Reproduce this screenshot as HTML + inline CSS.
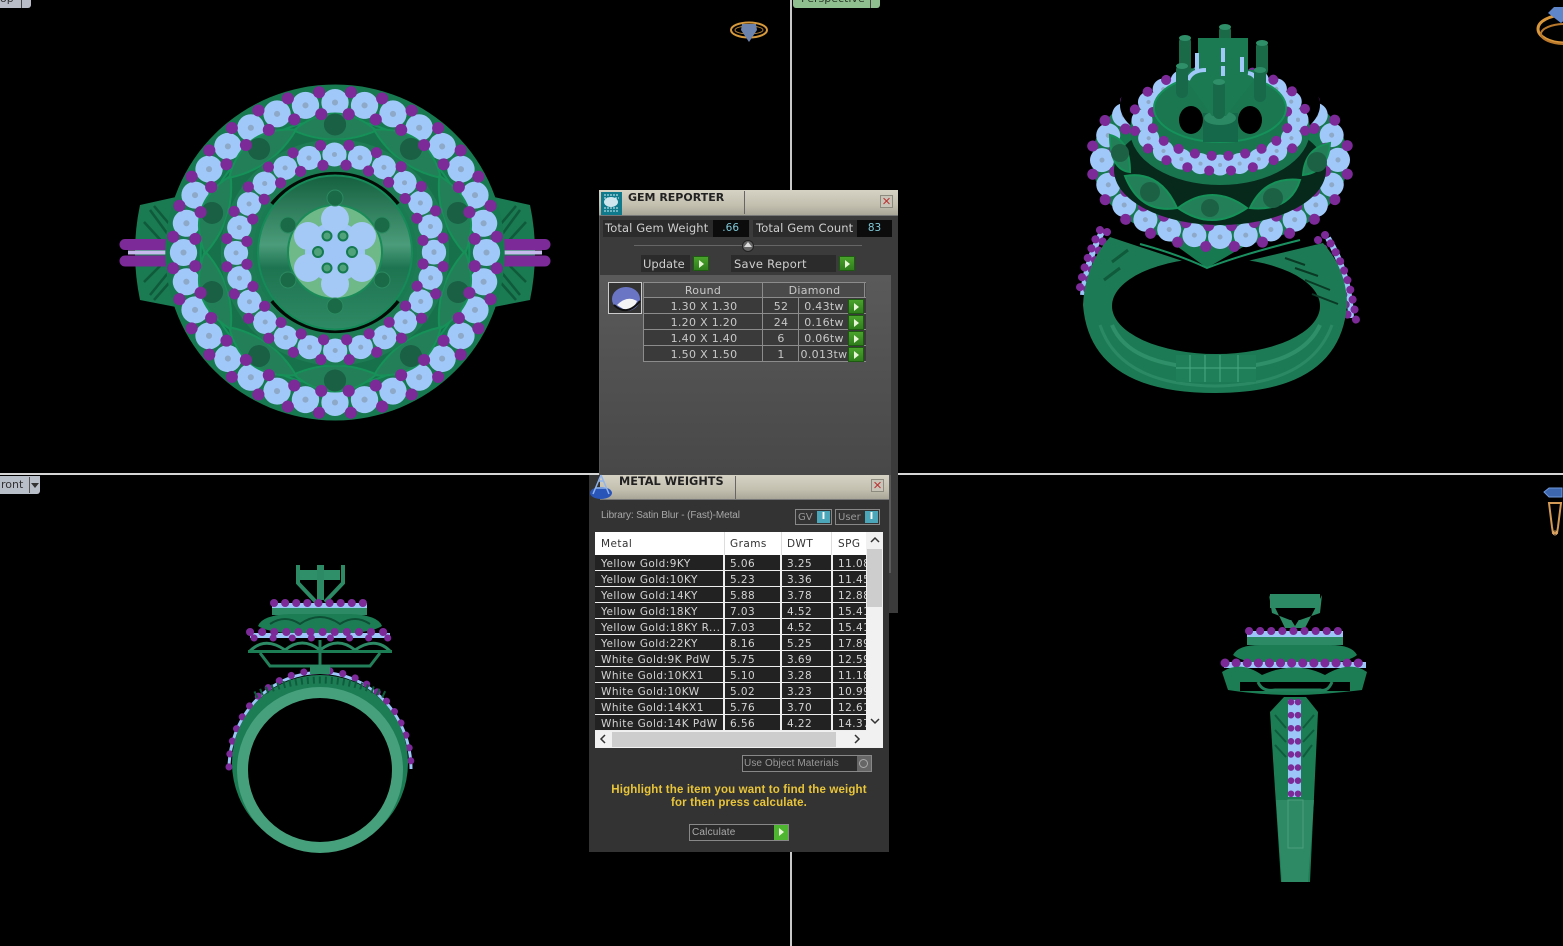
<!DOCTYPE html>
<html><head><meta charset="utf-8"><title>Gem Reporter</title>
<style>
html,body{margin:0;padding:0;background:#000;width:1563px;height:946px;overflow:hidden}
body{position:relative;font-family:"DejaVu Sans","Liberation Sans",sans-serif;font-size:11px;color:#cfcfcf}
svg.bg{position:absolute;left:0;top:0}
.a{position:absolute;white-space:nowrap;box-sizing:border-box}
.gem{fill:none;stroke:#a0c8f8;stroke-linecap:round;stroke-dasharray:.001 .999}
.core{fill:none;stroke:#8ea8c8;stroke-linecap:round;stroke-dasharray:.001 .999}
.pur{fill:none;stroke:#7b2a97;stroke-linecap:round;stroke-dasharray:.001 .999;stroke-dashoffset:.5}
.btn{position:absolute;background:linear-gradient(#4aa32c,#2f7d1c);box-sizing:border-box;border:1px solid #1f5a12}
.btn:after{content:"";position:absolute;left:5px;top:3px;border-left:5px solid #e8f6d8;border-top:4px solid transparent;border-bottom:4px solid transparent}
.title{background:linear-gradient(#d6d2c4,#c4c0b0 60%,#a9a698);border-bottom:1px solid #777}
.x{position:absolute;width:13px;height:13px;background:#c8c4b8;border:1px solid #8d8a80;box-sizing:border-box;color:#b33;font:15px/11px "Liberation Sans",sans-serif;text-align:center}
.r{position:absolute;left:644px;width:222px;height:16px;border-bottom:1px solid #8c8c8c;background:#3a3a3a;color:#c8c8c8;box-sizing:border-box;line-height:15px;letter-spacing:.3px}
.r span{position:absolute;top:1px;text-align:center}
.r.h span{top:0}
.m{position:absolute;left:0;width:271px;height:16px;background:#222;color:#d4d4d4;border-bottom:1px solid #eee;box-sizing:border-box;line-height:15px;font-size:10.5px;letter-spacing:.45px}
.m span{position:absolute;top:2px;white-space:nowrap}
.m i{position:absolute;top:0;width:2px;height:16px;background:#eee}
</style></head>
<body>
<svg class="bg" width="1563" height="946" viewBox="0 0 1563 946" xmlns="http://www.w3.org/2000/svg">
<defs>
<linearGradient id="disk" x1="0" y1="0" x2="0" y2="1"><stop offset="0" stop-color="#14603f"/><stop offset=".45" stop-color="#4b9c7a"/><stop offset=".6" stop-color="#1d7450"/><stop offset="1" stop-color="#2e8a64"/></linearGradient>
<g id="eye"><path d="M-41 -122Q0 -156 41 -122Q0 -104 -41 -122Z" fill="#237f58" stroke="#169158" stroke-width="2"/><circle cy="-128" r="11" fill="#1a6045"/></g>
</defs>
<rect width="1563" height="946" fill="#000"/>

<!-- TOP VIEW -->
<g>
<path d="M140 205L176 197V307L140 300Q130 252 140 205Z" fill="#1a7a52"/>
<path d="M530 205L494 197V307L530 300Q540 252 530 205Z" fill="#1a7a52"/>
<path d="M150 210L172 240M144 222L166 246M154 206L176 232M150 295L172 268M144 282L166 260M154 300L176 275M520 210L498 240M526 222L504 246M516 206L494 232M520 295L498 268M526 282L504 260M516 300L494 275" stroke="#0f5a3a" stroke-width="2.500"/>
<g stroke="#7b2a97" stroke-width="11" stroke-linecap="round"><path d="M125 244.500H170M125 261H170M500 244.500H545M500 261H545"/></g>
<path d="M128 252.500H175M495 252.500H542" stroke="#c7b8ee" stroke-width="4"/>
<g transform="translate(335 252.500) scale(1.01 1)">
<circle r="168" fill="#17794f"/>
<circle r="150" pathLength="32" class="gem" stroke-width="27"/>
<circle r="150" pathLength="32" class="core" stroke-width="6"/>
<circle r="161" pathLength="32" class="pur" stroke-width="12"/>
<circle r="133" fill="#17724b"/>
<circle r="133" fill="none" stroke="#15925c" stroke-width="2"/>
<use href="#eye"/>
<use href="#eye" transform="rotate(36)"/>
<use href="#eye" transform="rotate(72)"/>
<use href="#eye" transform="rotate(108)"/>
<use href="#eye" transform="rotate(144)"/>
<use href="#eye" transform="rotate(180)"/>
<use href="#eye" transform="rotate(216)"/>
<use href="#eye" transform="rotate(252)"/>
<use href="#eye" transform="rotate(288)"/>
<use href="#eye" transform="rotate(324)"/>
<circle r="139" pathLength="32" class="pur" stroke-width="12"/>
<circle r="113" fill="#1d7c54"/>
<circle r="98" pathLength="24" class="gem" stroke-width="24"/>
<circle r="98" pathLength="24" class="core" stroke-width="5"/>
<circle r="108" pathLength="24" class="pur" stroke-width="11"/>
<circle r="88" pathLength="24" class="pur" stroke-width="11"/>
<circle r="81" fill="#1a7a52"/>
</g>
<path d="M272 204A81 81 0 0 1 398 204M272 301A81 81 0 0 0 398 301" fill="none" stroke="#020a06" stroke-width="4"/>
<circle cx="335" cy="252.500" r="77" fill="url(#disk)" stroke="#168a58" stroke-width="2"/>
<circle cx="335" cy="252" r="47" fill="#6fb888" stroke="#1a8a58" stroke-width="2"/>
<circle cx="335" cy="252" r="30" fill="#9fc6f6"/>
<g fill="#a4c9f6">
<circle cx="335" cy="219" r="14"/><circle cx="308" cy="236" r="14"/><circle cx="362" cy="236" r="14"/><circle cx="308" cy="268" r="14"/><circle cx="362" cy="268" r="14"/><circle cx="335" cy="284" r="14"/>
</g>
<g fill="#4fa27a" stroke="#157a50" stroke-width="2"><circle cx="318" cy="252" r="5"/><circle cx="352" cy="252" r="5"/><circle cx="327" cy="236" r="4.500"/><circle cx="343" cy="236" r="4.500"/><circle cx="327" cy="268" r="4.500"/><circle cx="343" cy="268" r="4.500"/></g>
<g fill="#1a6a48" stroke="#2b8a60"><circle cx="335" cy="198" r="8"/><circle cx="288" cy="225" r="8"/><circle cx="382" cy="225" r="8"/><circle cx="288" cy="280" r="8"/><circle cx="382" cy="280" r="8"/><circle cx="335" cy="306" r="8"/></g>
</g>

<!-- PERSPECTIVE VIEW -->
<g>
<path d="M1102 232Q1086 262 1083 295" stroke="#9cc5f8" stroke-width="6" fill="none"/>
<path d="M1328 238Q1350 275 1351 318" stroke="#9cc5f8" stroke-width="6" fill="none"/>
<g stroke-linecap="round" fill="none" stroke="#7b2a97" stroke-width="8" stroke-dasharray=".1 10">
<path d="M1100 230Q1082 265 1079 295"/><path d="M1107 232Q1090 268 1087 290"/>
<path d="M1325 235Q1350 270 1356 320"/><path d="M1318 240Q1342 275 1348 318"/>
</g>
<path d="M1083 305Q1085 265 1110 237L1210 270L1323 243Q1347 270 1347 305Q1340 393 1215 393Q1090 393 1083 305Z" fill="#1c7b54"/>
<path d="M1100 325Q1120 385 1215 386Q1310 385 1332 325" fill="none" stroke="#2b8a64" stroke-width="3"/>
<ellipse cx="1216" cy="306" rx="104" ry="48" fill="#000"/>
<path d="M1112 325Q1130 368 1216 368Q1300 368 1320 325" fill="none" stroke="#2f8f68" stroke-width="4"/>
<path d="M1176 355H1256V382H1176Z" fill="#1e7f58"/>
<path d="M1176 368H1256M1190 355V382M1205 355V382M1220 355V382M1238 355V382" stroke="#4aa884" stroke-width="1"/>
<path d="M1285 258L1305 265M1295 268L1318 276M1305 280L1330 290M1312 294L1338 304" stroke="#0a3a26" stroke-width="2"/>
<path d="M1112 262L1128 250M1104 280L1120 268" stroke="#0f5a3a" stroke-width="3"/>
<path d="M1120 205L1207 268L1315 205Z" fill="#17794f"/>
<path d="M1140 244Q1180 255 1207 268Q1240 255 1300 240" fill="none" stroke="#1a9060" stroke-width="2"/>
<ellipse cx="1220" cy="160" rx="128" ry="86" fill="#17794f"/>
<ellipse cx="1220" cy="160" rx="118" ry="77" pathLength="24" class="gem" stroke-width="24"/>
<ellipse cx="1220" cy="160" rx="118" ry="77" pathLength="24" class="core" stroke-width="5"/>
<ellipse cx="1220" cy="160" rx="129" ry="87" pathLength="24" class="pur" stroke-width="11"/>
<ellipse cx="1220" cy="160" rx="107" ry="66" pathLength="24" class="pur" stroke-width="11"/>
<ellipse cx="1220" cy="105" rx="100" ry="46" fill="#000"/>
<ellipse cx="1220" cy="170" rx="106" ry="55" fill="#07291c"/>
<g fill="#237f58" stroke="#169158" stroke-width="2">
<path d="M1178 208Q1212 182 1247 208Q1212 232 1178 208Z"/>
<path d="M1125 176Q1160 170 1177 208Q1140 214 1125 176Z"/>
<path d="M1250 208Q1265 176 1300 180Q1290 212 1250 208Z"/>
<path d="M1110 135Q1130 140 1130 172Q1110 170 1110 135Z"/>
<path d="M1330 143Q1305 148 1303 175Q1328 172 1330 143Z"/>
</g>
<g fill="#1d6145"><circle cx="1210" cy="208" r="9"/><circle cx="1150" cy="192" r="10"/><circle cx="1273" cy="198" r="10"/><circle cx="1120" cy="153" r="9"/><circle cx="1317" cy="162" r="10"/></g>
<ellipse cx="1220" cy="130" rx="90" ry="55" fill="#18754e"/>
<ellipse cx="1220" cy="120" rx="78" ry="45" pathLength="20" class="gem" stroke-width="21"/>
<ellipse cx="1220" cy="120" rx="78" ry="45" pathLength="20" class="core" stroke-width="4"/>
<ellipse cx="1220" cy="120" rx="87" ry="51" pathLength="20" class="pur" stroke-width="10"/>
<ellipse cx="1220" cy="120" rx="69" ry="36" pathLength="20" class="pur" stroke-width="10"/>
<ellipse cx="1220" cy="108" rx="66" ry="34" fill="#1a7750" stroke="#15915a" stroke-width="2"/>
<ellipse cx="1191" cy="120" rx="12" ry="14" fill="#000"/><ellipse cx="1250" cy="120" rx="12" ry="14" fill="#000"/>
<rect x="1203" y="113" width="35" height="29" fill="#15684a"/>
<ellipse cx="1220" cy="118" rx="16" ry="7" fill="#2b8a63"/>
<path d="M1178 68L1262 70L1226 116H1212Z" fill="#1b7a52"/>
<g fill="none" stroke-linecap="round" stroke="#1a6a48" stroke-width="12"><path d="M1185 42V68M1225 31V58M1262 47V70"/></g>
<rect x="1198" y="38" width="50" height="35" fill="#1b7a52"/>
<g fill="none" stroke="#a0c8f8" stroke-width="4"><path d="M1197 53V70M1242 57V72M1223 48V62M1223 66V76"/><path d="M1188 80Q1192 70 1206 70M1248 73Q1256 74 1258 84"/></g>
<g fill="none" stroke-linecap="round" stroke="#18684a" stroke-width="12"><path d="M1182 70V92M1260 74V96M1219 86V113"/></g>
<g fill="#2f8f68"><ellipse cx="1185" cy="38" rx="6" ry="3"/><ellipse cx="1225" cy="27" rx="6" ry="3"/><ellipse cx="1262" cy="43" rx="6" ry="3"/><ellipse cx="1182" cy="66" rx="6" ry="3"/><ellipse cx="1260" cy="70" rx="6" ry="3"/><ellipse cx="1219" cy="82" rx="6" ry="3"/></g>
</g>

<!-- FRONT VIEW -->
<g>
<path d="M229 767A90.500 96 0 0 1 411 767" fill="none" stroke="#9cc5f8" stroke-width="3" transform="translate(0 2)"/>
<path d="M229 767A90.500 96 0 0 1 411 767" fill="none" stroke="#7b2a97" stroke-width="7" stroke-linecap="round" stroke-dasharray=".1 13"/>
<circle cx="320" cy="763" r="88" fill="#1c7d55"/>
<path d="M255 695Q320 665 385 695" fill="none" stroke="#0e5c3b" stroke-width="7" stroke-dasharray="2 4"/>
<circle cx="320" cy="770" r="83" fill="#46a07c"/>
<circle cx="320" cy="770" r="72" fill="#000"/>
<path d="M298 565V583L316 602M343 565V583L325 602" stroke="#2c8a64" stroke-width="4" fill="none"/>
<rect x="300" y="570" width="40" height="10" fill="#2f8f68"/>
<rect x="317" y="565" width="7" height="35" fill="#2c8a64"/>
<rect x="272" y="603" width="95" height="5" fill="#9cc5f8"/>
<path d="M274 603H367" stroke="#7b2a97" stroke-width="8" stroke-linecap="round" stroke-dasharray=".1 11"/>
<rect x="272" y="608" width="95" height="7" fill="#2c8a64"/>
<path d="M258 626Q262 615 290 614H350Q378 615 382 626Q370 634 320 635Q270 634 258 626Z" fill="#1c7d55"/>
<path d="M270 624Q285 614 300 624Q320 610 340 624Q355 614 370 624" stroke="#0d4f35" stroke-width="2" fill="none"/>
<rect x="250" y="633" width="140" height="5" fill="#9cc5f8"/>
<path d="M250 632H392" stroke="#7b2a97" stroke-width="8" stroke-linecap="round" stroke-dasharray=".1 12"/>
<path d="M254 638H388" stroke="#7b2a97" stroke-width="7" stroke-linecap="round" stroke-dasharray=".1 19"/>
<path d="M250 651Q265 636 285 650Q302 636 320 650Q338 636 355 650Q375 636 390 651" fill="none" stroke="#2c8a64" stroke-width="3"/>
<rect x="248" y="650" width="144" height="3" fill="#1c7d55"/>
<path d="M260 653L270 666H370L380 653M320 640V666" fill="none" stroke="#22805a" stroke-width="3"/>
<rect x="310" y="665" width="20" height="9" fill="#2c8a64"/>
</g>

<!-- RIGHT VIEW -->
<g>
<path d="M1269 595L1285 628H1305L1322 595L1320 613L1300 620H1290L1272 613Z" fill="#2c8a64"/>
<rect x="1270" y="594" width="50" height="14" fill="#2c8a64"/>
<path d="M1285 610H1305L1295 626Z" fill="#000"/>
<rect x="1247" y="631" width="96" height="6" fill="#9cc5f8"/>
<path d="M1249 631H1342" stroke="#7b2a97" stroke-width="8" stroke-linecap="round" stroke-dasharray=".1 11"/>
<rect x="1247" y="637" width="96" height="8" fill="#2c8a64"/>
<path d="M1233 655Q1238 645 1260 645H1330Q1352 645 1357 655Q1345 665 1295 665Q1245 665 1233 655Z" fill="#1c7d55"/>
<rect x="1224" y="662" width="142" height="6" fill="#9cc5f8"/>
<path d="M1225 663H1365" stroke="#7b2a97" stroke-width="9" stroke-linecap="round" stroke-dasharray=".1 11"/>
<path d="M1222 672Q1240 660 1262 675Q1295 660 1325 675Q1350 660 1367 672L1362 690Q1320 695 1295 695Q1260 695 1228 690Z" fill="#1c7d55"/>
<path d="M1240 682H1350V691H1240Z" fill="#000"/>
<path d="M1258 682Q1262 692 1275 690H1320Q1328 692 1332 682" stroke="#22805a" stroke-width="3" fill="none"/>
<path d="M1284 697H1306L1318 712L1310 882H1281L1270 712Z" fill="#1c7d55"/>
<path d="M1276 800H1314L1308 882H1282Z" fill="#2d8a65"/>
<path d="M1288 800H1303V848H1288Z" fill="none" stroke="#4aa07c"/>
<rect x="1288" y="700" width="13" height="97" fill="#9cc5f8"/>
<path d="M1291 702V797M1298 702V797" stroke="#7b2a97" stroke-width="6.500" stroke-linecap="round" stroke-dasharray=".1 13"/>
<path d="M1275 715L1286 728M1275 730L1286 742M1275 745L1286 757M1314 715L1303 728M1314 730L1303 742M1312 745L1303 757" stroke="#0e5c3b" stroke-width="2"/>
</g>

<!-- GUMBALLS -->
<g fill="none">
<ellipse cx="749" cy="30" rx="18" ry="7.500" stroke="#d79a3c" stroke-width="2"/>
<ellipse cx="749" cy="30" rx="14" ry="4" stroke="#b47f30"/>
<path d="M742 24h14l1 6l-8 12l-8 -12z" fill="#6c83ad"/>
<ellipse cx="1565" cy="29" rx="27" ry="14" stroke="#d9973c" stroke-width="3"/>
<ellipse cx="1565" cy="34" rx="24" ry="10" stroke="#b8782c" stroke-width="2"/>
<path d="M1548 13l6 -6h13l6 6l-12 10z" fill="#5f86c8"/>
<path d="M1544 492l5 -4h13v9h-13z" fill="#3d68b0" stroke="#6f97dc"/>
<path d="M1549 503H1561L1558 527L1557 533H1553L1552 527Z" stroke="#d29a56" stroke-width="2"/>
<circle cx="1555" cy="533" r="2" stroke="#e0ac6c"/>
</g>

<!-- VIEWPORT DIVIDERS -->
<rect x="790" y="0" width="2" height="190" fill="#c9c9c9"/>
<rect x="790" y="852" width="2" height="94" fill="#c9c9c9"/>
<rect x="0" y="473" width="600" height="2" fill="#d6d6d6"/>
<rect x="898" y="473" width="665" height="2" fill="#d6d6d6"/>
</svg>

<!-- Tabs -->
<div class="a" style="left:0;top:0;width:31px;height:8px;background:#b9bdc8;border-radius:0 0 3px 0;overflow:hidden;color:#333;line-height:0;font-size:11px"><span style="position:absolute;left:0;top:-8px;line-height:13px">op</span><span style="position:absolute;left:21px;top:0;width:1px;height:8px;background:#444"></span></div>
<div class="a" style="left:793px;top:0;width:87px;height:8px;background:#8fbf8f;border-radius:0 0 3px 3px;overflow:hidden;color:#2a3a2a"><span style="position:absolute;left:8px;top:-8px;line-height:13px">Perspective</span><span style="position:absolute;left:77px;top:0;width:1px;height:8px;background:#444"></span></div>
<div class="a" style="left:0;top:476px;width:40px;height:18px;background:#b9bfc9;border-radius:0 0 3px 0;color:#333;line-height:18px"><span style="position:absolute;left:1px;top:0">ront</span><span style="position:absolute;left:29px;top:1px;width:1px;height:16px;background:#555"></span><span style="position:absolute;left:31px;top:7px;border-top:5px solid #333;border-left:4px solid transparent;border-right:4px solid transparent"></span></div>

<!-- GEM REPORTER -->
<div class="a" style="left:599px;top:190px;width:299px;height:423px;background:#3b3b3b;border-left:1px solid #555"></div>
<div class="a title" style="left:599px;top:190px;width:299px;height:26px"></div>
<div class="a" style="left:744px;top:191px;width:1px;height:23px;background:#666"></div>
<div class="a" style="left:601px;top:192px;width:21px;height:23px;background:#0e7a8c"><svg width="21" height="23"><ellipse cx="10" cy="10" rx="7" ry="5" fill="#cfe6ee"/><path d="M3 3h15M3 6h4M14 6h4M3 16h15M3 19h15" stroke="#d5f0f5" stroke-dasharray="2 1"/></svg></div>
<div class="a" style="left:628px;top:191px;font-weight:bold;font-size:11px;line-height:14px;color:#222">GEM REPORTER</div>
<div class="x" style="left:880px;top:195px">×</div>

<div class="a" style="left:603px;top:220px;width:110px;height:17px;background:#2b2b2b;line-height:16px;padding-left:2px;font-size:11.500px;letter-spacing:.12px">Total Gem Weight</div>
<div class="a" style="left:713px;top:220px;width:36px;height:17px;background:#0c0c0c;color:#7fc8d8;text-align:right;padding-right:10px;line-height:17px;font-size:10.500px">.66</div>
<div class="a" style="left:753px;top:220px;width:105px;height:17px;background:#2b2b2b;line-height:16px;padding-left:3px;font-size:11.500px;letter-spacing:.12px">Total Gem Count</div>
<div class="a" style="left:857px;top:220px;width:35px;height:17px;background:#0c0c0c;color:#7fc8d8;text-align:center;line-height:17px;font-size:10.500px">83</div>
<div class="a" style="left:634px;top:245px;width:228px;height:1px;background:#0c0c0c;border-bottom:1px solid #666"></div>
<div class="a" style="left:742px;top:240px;width:12px;height:12px;border-radius:50%;background:#666;border:1px solid #222"><span style="position:absolute;left:1px;top:1px;border-bottom:5px solid #ddd;border-left:4px solid transparent;border-right:4px solid transparent"></span></div>
<div class="a" style="left:641px;top:255px;width:49px;height:17px;background:#2b2b2b;line-height:19px;padding-left:2px;font-size:11.500px">Update</div>
<div class="btn" style="left:693px;top:256px;width:16px;height:15px"></div>
<div class="a" style="left:731px;top:255px;width:105px;height:17px;background:#2b2b2b;line-height:19px;padding-left:3px;font-size:11.500px;letter-spacing:.25px">Save Report</div>
<div class="btn" style="left:839px;top:256px;width:16px;height:15px"></div>

<div class="a" style="left:600px;top:275px;width:291px;height:200px;background:linear-gradient(#5a5a5a,#484848)"></div>
<div class="a" style="left:608px;top:282px;width:34px;height:32px;border:1px solid #ccc;background:#333"><svg width="32" height="30"><ellipse cx="17" cy="16" rx="14" ry="12" fill="#6a76c4"/><path d="M8 22Q18 12 28 18Q24 28 16 27Z" fill="#f4f4f4"/><path d="M5 22Q18 34 31 18" stroke="#111" fill="none" stroke-width="2"/></svg></div>
<div class="r h" style="top:282px;background:#4a4a4a;border-top:1px solid #8c8c8c"><span style="left:0;width:118px">Round</span><span style="left:119px;width:103px">Diamond</span></div>
<div class="r" style="top:298px"><span style="left:0;width:120px">1.30 X 1.30</span><span style="left:119px;width:36px">52</span><span style="left:155px;width:50px">0.43tw</span></div>
<div class="r" style="top:314px"><span style="left:0;width:120px">1.20 X 1.20</span><span style="left:119px;width:36px">24</span><span style="left:155px;width:50px">0.16tw</span></div>
<div class="r" style="top:330px"><span style="left:0;width:120px">1.40 X 1.40</span><span style="left:119px;width:36px">6</span><span style="left:155px;width:50px">0.06tw</span></div>
<div class="r" style="top:346px"><span style="left:0;width:120px">1.50 X 1.50</span><span style="left:119px;width:36px">1</span><span style="left:155px;width:50px">0.013tw</span></div>
<div class="a" style="left:762px;top:282px;width:1px;height:80px;background:#8c8c8c"></div>
<div class="a" style="left:798px;top:298px;width:1px;height:64px;background:#8c8c8c"></div>
<div class="a" style="left:643px;top:282px;width:1px;height:80px;background:#8c8c8c"></div>
<div class="a" style="left:864px;top:282px;width:1px;height:16px;background:#8c8c8c"></div>
<div class="btn" style="left:848px;top:299px;width:16px;height:15px"></div>
<div class="btn" style="left:848px;top:315px;width:16px;height:15px"></div>
<div class="btn" style="left:848px;top:331px;width:16px;height:15px"></div>
<div class="btn" style="left:848px;top:347px;width:16px;height:15px"></div>
<div class="a" style="left:889px;top:475px;width:9px;height:138px;background:#3b3b3b"></div>
<div class="a" style="left:889px;top:475px;width:2px;height:98px;background:#5a5a5a"></div>

<!-- METAL WEIGHTS -->
<div class="a" style="left:589px;top:475px;width:300px;height:377px;background:#333"></div>
<div class="a title" style="left:600px;top:475px;width:289px;height:25px"></div>
<div class="a" style="left:735px;top:476px;width:1px;height:23px;background:#666"></div>
<div class="a" style="left:588px;top:472px;width:26px;height:28px"><svg width="26" height="28"><ellipse cx="13" cy="21" rx="11" ry="6" fill="#2a55b8"/><path d="M13 3L5 22M13 3L21 22M7 16H19M10 9H16" stroke="#8fb4ee" stroke-width="1.500" fill="none"/></svg></div>
<div class="a" style="left:619px;top:475px;font-weight:bold;font-size:11.300px;line-height:14px;color:#222">METAL WEIGHTS</div>
<div class="x" style="left:871px;top:479px">×</div>
<div class="a" style="left:601px;top:510px;color:#a8a8a8;font-family:'Liberation Sans',sans-serif;font-size:10px;line-height:12px;letter-spacing:-.1px">Library: Satin Blur - (Fast)-Metal</div>
<div class="a" style="left:795px;top:509px;width:37px;height:16px;border:1px solid #888;color:#999;line-height:16px;padding-left:2px;font-size:10px">GV<span style="position:absolute;right:1px;top:1px;width:13px;height:12px;background:#4aa6b8;color:#fff;text-align:center;line-height:12px;font-weight:bold">I</span></div>
<div class="a" style="left:835px;top:509px;width:45px;height:16px;border:1px solid #888;color:#999;line-height:16px;padding-left:2px;font-size:10px">User<span style="position:absolute;right:1px;top:1px;width:13px;height:12px;background:#4aa6b8;color:#fff;text-align:center;line-height:12px;font-weight:bold">I</span></div>

<div class="a" style="left:595px;top:532px;width:288px;height:216px;background:#f1f1f1"></div>
<div class="a" style="left:595px;top:532px;width:271px;height:24px;background:#fff;color:#333;font-size:10.500px;line-height:25px;letter-spacing:.45px;overflow:hidden">
<span style="position:absolute;left:6px">Metal</span><span style="position:absolute;left:135px">Grams</span><span style="position:absolute;left:192px">DWT</span><span style="position:absolute;left:243px">SPG</span>
<i style="position:absolute;left:129px;top:0;width:1px;height:24px;background:#ddd"></i><i style="position:absolute;left:186px;top:0;width:1px;height:24px;background:#ddd"></i><i style="position:absolute;left:236px;top:0;width:1px;height:24px;background:#ddd"></i>
</div>
<div class="a" style="left:595px;top:555px;width:271px;height:176px;overflow:hidden">
<div class="m" style="top:0"><span style="left:6px">Yellow Gold:9KY</span><span style="left:135px">5.06</span><span style="left:192px">3.25</span><span style="left:243px">11.08</span><i style="left:128px"></i><i style="left:185px"></i><i style="left:236px"></i></div>
<div class="m" style="top:16px"><span style="left:6px">Yellow Gold:10KY</span><span style="left:135px">5.23</span><span style="left:192px">3.36</span><span style="left:243px">11.45</span><i style="left:128px"></i><i style="left:185px"></i><i style="left:236px"></i></div>
<div class="m" style="top:32px"><span style="left:6px">Yellow Gold:14KY</span><span style="left:135px">5.88</span><span style="left:192px">3.78</span><span style="left:243px">12.88</span><i style="left:128px"></i><i style="left:185px"></i><i style="left:236px"></i></div>
<div class="m" style="top:48px"><span style="left:6px">Yellow Gold:18KY</span><span style="left:135px">7.03</span><span style="left:192px">4.52</span><span style="left:243px">15.41</span><i style="left:128px"></i><i style="left:185px"></i><i style="left:236px"></i></div>
<div class="m" style="top:64px"><span style="left:6px">Yellow Gold:18KY R...</span><span style="left:135px">7.03</span><span style="left:192px">4.52</span><span style="left:243px">15.41</span><i style="left:128px"></i><i style="left:185px"></i><i style="left:236px"></i></div>
<div class="m" style="top:80px"><span style="left:6px">Yellow Gold:22KY</span><span style="left:135px">8.16</span><span style="left:192px">5.25</span><span style="left:243px">17.89</span><i style="left:128px"></i><i style="left:185px"></i><i style="left:236px"></i></div>
<div class="m" style="top:96px"><span style="left:6px">White Gold:9K PdW</span><span style="left:135px">5.75</span><span style="left:192px">3.69</span><span style="left:243px">12.59</span><i style="left:128px"></i><i style="left:185px"></i><i style="left:236px"></i></div>
<div class="m" style="top:112px"><span style="left:6px">White Gold:10KX1</span><span style="left:135px">5.10</span><span style="left:192px">3.28</span><span style="left:243px">11.18</span><i style="left:128px"></i><i style="left:185px"></i><i style="left:236px"></i></div>
<div class="m" style="top:128px"><span style="left:6px">White Gold:10KW</span><span style="left:135px">5.02</span><span style="left:192px">3.23</span><span style="left:243px">10.99</span><i style="left:128px"></i><i style="left:185px"></i><i style="left:236px"></i></div>
<div class="m" style="top:144px"><span style="left:6px">White Gold:14KX1</span><span style="left:135px">5.76</span><span style="left:192px">3.70</span><span style="left:243px">12.61</span><i style="left:128px"></i><i style="left:185px"></i><i style="left:236px"></i></div>
<div class="m" style="top:160px"><span style="left:6px">White Gold:14K PdW</span><span style="left:135px">6.56</span><span style="left:192px">4.22</span><span style="left:243px">14.37</span><i style="left:128px"></i><i style="left:185px"></i><i style="left:236px"></i></div>
</div>
<div class="a" style="left:867px;top:549px;width:15px;height:58px;background:#cdcdcd"></div>
<div class="a" style="left:612px;top:732px;width:224px;height:15px;background:#cdcdcd"></div>
<svg class="a" style="left:595px;top:532px" width="288" height="216"><path d="M276 10L280 6L284 10M276 187L280 191L284 187M10 203L6 207L10 211M260 203L264 207L260 211" fill="none" stroke="#333" stroke-width="1.500"/></svg>

<div class="a" style="left:742px;top:755px;width:130px;height:17px;border:1px solid #888;background:#2b2b2b;color:#999;line-height:15px;padding-left:1px;font-family:'Liberation Sans',sans-serif;font-size:10px;letter-spacing:.1px">Use Object Materials<span style="position:absolute;right:0;top:0;width:14px;height:15px;background:#666"></span><span style="position:absolute;right:3px;top:3px;width:7px;height:7px;border:1px solid #aaa;border-radius:50%"></span></div>
<div class="a" style="left:589px;top:784px;width:300px;text-align:center;color:#e9c53a;font-family:'Liberation Sans',sans-serif;font-weight:bold;font-size:11.500px;line-height:13px;letter-spacing:.15px;white-space:normal">Highlight the item you want to find the weight<br>for then press calculate.</div>
<div class="a" style="left:689px;top:824px;width:100px;height:17px;border:1px solid #888;background:#2b2b2b;color:#aaa;line-height:15px;padding-left:2px;font-family:'Liberation Sans',sans-serif;font-size:10px;letter-spacing:.2px">Calculate</div>
<div class="btn" style="left:774px;top:825px;width:14px;height:15px;background:#4db52f;border:0"></div>
</body></html>
